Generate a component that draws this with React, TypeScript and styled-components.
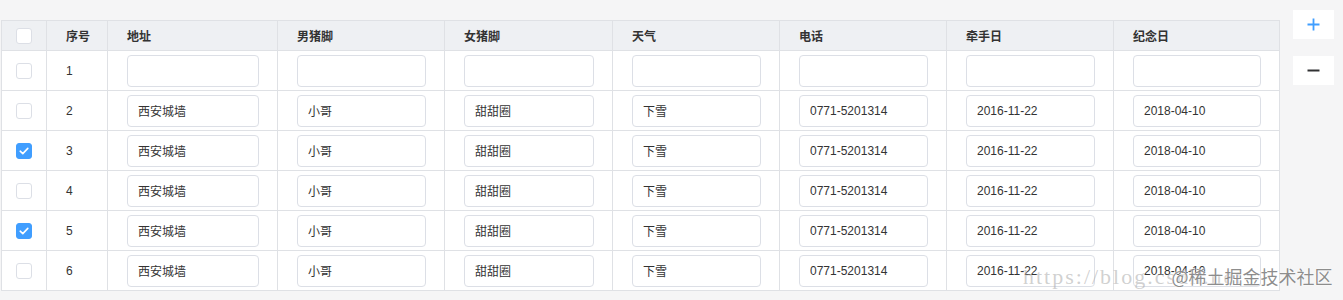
import React, { useState } from 'react';
import styled, { createGlobalStyle } from 'styled-components';

const GlobalStyle = createGlobalStyle`
  body {
    margin: 0;
    background: #f5f5f6;
    font-family: "Liberation Sans", "Noto Sans CJK SC", sans-serif;
  }
`;

interface RowData {
  id: number
  address: string
  boy: string
  girl: string
  weather: string
  phone: string
  handDay: string
  memDay: string
}

const columns: Array<{ key: keyof RowData, title: string, width: number }> = [
  { key: 'address', title: '地址', width: 170 },
  { key: 'boy', title: '男猪脚', width: 167 },
  { key: 'girl', title: '女猪脚', width: 168 },
  { key: 'weather', title: '天气', width: 167 },
  { key: 'phone', title: '电话', width: 167 },
  { key: 'handDay', title: '牵手日', width: 167 },
  { key: 'memDay', title: '纪念日', width: 166 },
];

const filled = (id: number): RowData => ({
  id,
  address: '西安城墙',
  boy: '小哥',
  girl: '甜甜圈',
  weather: '下雪',
  phone: '0771-5201314',
  handDay: '2016-11-22',
  memDay: '2018-04-10',
});

const initialRows: RowData[] = [
  { id: 1, address: '', boy: '', girl: '', weather: '', phone: '', handDay: '', memDay: '' },
  filled(2), filled(3), filled(4), filled(5), filled(6),
];

const Page = styled.div`
  position: relative;
  display: flex;
  align-items: flex-start;
  height: 300px;
  overflow: hidden;
`;

const TableWrap = styled.div`
  padding: 20px 0 0 1px;
`;

const Table = styled.table`
  border-collapse: collapse;
  table-layout: fixed;
  width: 1279px;
  background: #fff;
  border: 1px solid #dfe1e5;
`;

const Th = styled.th<{ $w: number }>`
  width: ${p => p.$w}px;
  height: 30px;
  padding: 0 0 0 19px;
  text-align: left;
  font-size: 12px;
  font-weight: bold;
  color: #333;
  background: #eef0f3;
  border: 1px solid #dfe1e5;
  box-sizing: border-box;
`;

const CheckTh = styled(Th)`
  padding: 0;
  text-align: center;
`;

const Td = styled.td`
  height: 40px;
  padding: 0 18px 0 19px;
  font-size: 12px;
  color: #333;
  border: 1px solid #dfe1e5;
  box-sizing: border-box;
`;

const CheckTd = styled(Td)`
  padding: 0;
  text-align: center;
`;

const Box = styled.span<{ $on: boolean }>`
  display: inline-flex;
  align-items: center;
  justify-content: center;
  width: 16px;
  height: 16px;
  box-sizing: border-box;
  border-radius: 3px;
  border: 1px solid ${p => (p.$on ? '#409eff' : '#dcdfe6')};
  background: ${p => (p.$on ? '#409eff' : '#fff')};
  vertical-align: middle;
  cursor: pointer;
`;

const Input = styled.input`
  display: block;
  width: 100%;
  height: 32px;
  box-sizing: border-box;
  padding: 0 10px;
  border: 1px solid #dcdfe6;
  border-radius: 4px;
  font-family: "Liberation Sans", "Noto Sans CJK SC", sans-serif;
  font-size: 12px;
  color: #333;
  outline: none;
  background: #fff;
`;

const Side = styled.div`
  display: flex;
  flex-direction: column;
  gap: 17px;
  margin: 10px 0 0 13px;
`;

const SideButton = styled.button<{ $color: string }>`
  display: flex;
  align-items: center;
  justify-content: center;
  width: 41px;
  height: 29px;
  padding: 0;
  border: none;
  background: #fff;
  color: ${p => p.$color};
  cursor: pointer;
`;

const Watermark = styled.div`
  position: absolute;
  left: 1023px;
  top: 263px;
  display: flex;
  align-items: baseline;
  white-space: nowrap;
  pointer-events: none;
`;

const MarkUrl = styled.span`
  font-family: "Liberation Serif", serif;
  font-size: 22px;
  letter-spacing: 2px;
  color: rgba(170, 170, 170, 0.55);
`;

const MarkBrand = styled.span`
  margin-left: -72px;
  font-family: "Noto Sans CJK SC", sans-serif;
  font-size: 18px;
  color: rgba(120, 120, 120, 0.85);
  text-shadow: 0 0 2px #fff, 0 0 1px #fff;
`;

function Check({ on }: { on: boolean }) {
  return (
    <Box $on={on}>
      {on && (
        <svg width="10" height="8" viewBox="0 0 10 8">
          <path d="M1.2 4.2 L3.8 6.6 L8.8 1.4" fill="none" stroke="#fff" strokeWidth="1.6" strokeLinecap="round" strokeLinejoin="round" />
        </svg>
      )}
    </Box>
  );
}

export default function App() {
  const [rows, setRows] = useState<RowData[]>(initialRows);
  const [checked, setChecked] = useState<number[]>([3, 5]);

  const toggle = (id: number) =>
    setChecked(c => (c.includes(id) ? c.filter(x => x !== id) : [...c, id]));

  const update = (id: number, key: keyof RowData, value: string) =>
    setRows(r => r.map(row => (row.id === id ? { ...row, [key]: value } : row)));

  return (
    <Page>
      <GlobalStyle />
      <TableWrap>
        <Table>
          <thead>
            <tr>
              <CheckTh $w={45}><Check on={false} /></CheckTh>
              <Th $w={61}>序号</Th>
              {columns.map(col => <Th key={col.key} $w={col.width}>{col.title}</Th>)}
            </tr>
          </thead>
          <tbody>
            {rows.map(row => (
              <tr key={row.id}>
                <CheckTd onClick={() => toggle(row.id)}><Check on={checked.includes(row.id)} /></CheckTd>
                <Td>{row.id}</Td>
                {columns.map(col => (
                  <Td key={col.key}>
                    <Input value={String(row[col.key])} onChange={e => update(row.id, col.key, e.target.value)} />
                  </Td>
                ))}
              </tr>
            ))}
          </tbody>
        </Table>
      </TableWrap>
      <Side>
        <SideButton $color="#409eff">
          <svg width="13" height="13" viewBox="0 0 13 13">
            <path d="M6.5 0.5 V12.5 M0.5 6.5 H12.5" stroke="currentColor" strokeWidth="1.8" />
          </svg>
        </SideButton>
        <SideButton $color="#303133">
          <svg width="13" height="3" viewBox="0 0 13 3">
            <path d="M0.5 1.5 H12.5" stroke="currentColor" strokeWidth="2" />
          </svg>
        </SideButton>
      </Side>
      <Watermark>
        <MarkUrl>https://blog.csdn.net</MarkUrl>
        <MarkBrand>@稀土掘金技术社区</MarkBrand>
      </Watermark>
    </Page>
  );
}
